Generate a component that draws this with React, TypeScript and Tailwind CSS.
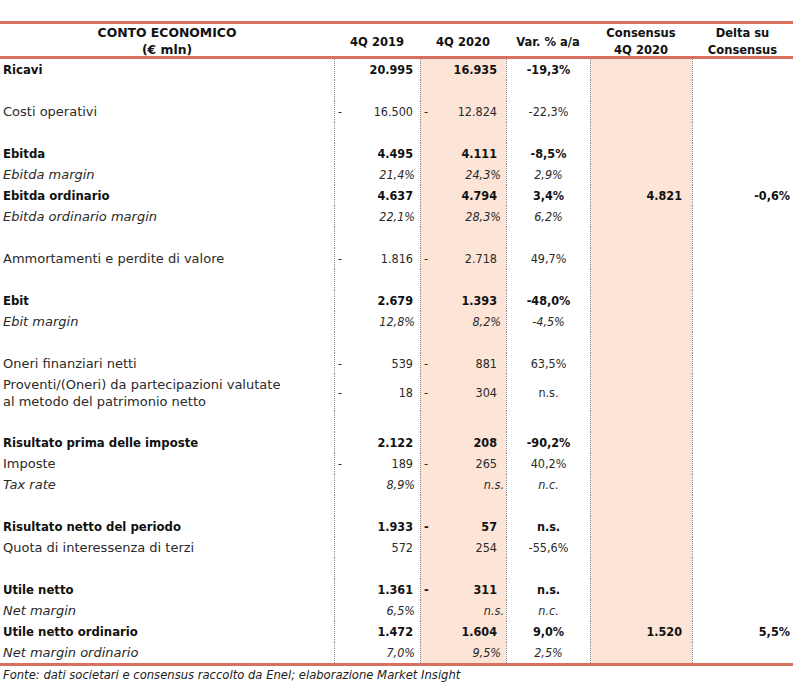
import React from "react";

type Row = {
  label?: string;
  label2?: string;
  kind: "bold" | "italic" | "normal" | "blank";
  c1?: string;
  d1?: boolean;
  c2?: string;
  d2?: boolean;
  c3?: string;
  c4?: string;
  c5?: string;
};

const rows: Row[] = [
  { label: "Ricavi", kind: "bold", c1: "20.995", c2: "16.935", c3: "-19,3%" },
  { kind: "blank" },
  { label: "Costi operativi", kind: "normal", c1: "16.500", d1: true, c2: "12.824", d2: true, c3: "-22,3%" },
  { kind: "blank" },
  { label: "Ebitda", kind: "bold", c1: "4.495", c2: "4.111", c3: "-8,5%" },
  { label: "Ebitda margin", kind: "italic", c1: "21,4%", c2: "24,3%", c3: "2,9%" },
  { label: "Ebitda ordinario", kind: "bold", c1: "4.637", c2: "4.794", c3: "3,4%", c4: "4.821", c5: "-0,6%" },
  { label: "Ebitda ordinario margin", kind: "italic", c1: "22,1%", c2: "28,3%", c3: "6,2%" },
  { kind: "blank" },
  { label: "Ammortamenti e perdite di valore", kind: "normal", c1: "1.816", d1: true, c2: "2.718", d2: true, c3: "49,7%" },
  { kind: "blank" },
  { label: "Ebit", kind: "bold", c1: "2.679", c2: "1.393", c3: "-48,0%" },
  { label: "Ebit margin", kind: "italic", c1: "12,8%", c2: "8,2%", c3: "-4,5%" },
  { kind: "blank" },
  { label: "Oneri finanziari netti", kind: "normal", c1: "539", d1: true, c2: "881", d2: true, c3: "63,5%" },
  {
    label: "Proventi/(Oneri) da partecipazioni valutate",
    label2: "al metodo del patrimonio netto",
    kind: "normal",
    c1: "18",
    d1: true,
    c2: "304",
    d2: true,
    c3: "n.s.",
  },
  { kind: "blank" },
  { label: "Risultato prima delle imposte", kind: "bold", c1: "2.122", c2: "208", c3: "-90,2%" },
  { label: "Imposte", kind: "normal", c1: "189", d1: true, c2: "265", d2: true, c3: "40,2%" },
  { label: "Tax rate", kind: "italic", c1: "8,9%", c2: "n.s.", c3: "n.c." },
  { kind: "blank" },
  { label: "Risultato netto del periodo", kind: "bold", c1: "1.933", c2: "57", d2: true, c3: "n.s." },
  { label: "Quota di interessenza di terzi", kind: "normal", c1: "572", c2: "254", c3: "-55,6%" },
  { kind: "blank" },
  { label: "Utile netto", kind: "bold", c1: "1.361", c2: "311", d2: true, c3: "n.s." },
  { label: "Net margin", kind: "italic", c1: "6,5%", c2: "n.s.", c3: "n.c." },
  { label: "Utile netto ordinario", kind: "bold", c1: "1.472", c2: "1.604", c3: "9,0%", c4: "1.520", c5: "5,5%" },
  { label: "Net margin ordinario", kind: "italic", c1: "7,0%", c2: "9,5%", c3: "2,5%" },
];

const GRID = "grid grid-cols-[334px_86px_86px_84px_102px_101px]";
const DOT = "border-l border-dotted border-[#8c8c8c]";
const SHADE = "bg-[#fce4d6]";

function textCls(kind: Row["kind"]) {
  if (kind === "bold") return "font-bold text-[#111] [font-stretch:condensed] font-['DejaVu_Sans_Condensed','DejaVu_Sans',sans-serif]";
  if (kind === "italic") return "italic text-[#2a2a2a] font-['DejaVu_Sans',sans-serif]";
  return "text-[#2a2a2a] font-['DejaVu_Sans',sans-serif]";
}

function numCls(kind: Row["kind"]) {
  if (kind === "bold") return "font-bold text-[#111]";
  if (kind === "italic") return "italic text-[#2a2a2a]";
  return "text-[#2a2a2a]";
}

function padFor(col: number, v: string) {
  const pct = v.endsWith("%");
  const ns = v.startsWith("n.");
  if (col === 1) return pct ? "pr-[5px]" : "pr-[7px]";
  if (col === 2) return ns ? "pr-[2px]" : pct ? "pr-[5px]" : "pr-[9px]";
  if (col === 4) return "pr-[10px]";
  return "pr-[3px]";
}

const NUMFONT = "font-['DejaVu_Sans_Condensed','DejaVu_Sans',sans-serif] [font-stretch:condensed] text-[12.5px]";

function ValueCell({
  v,
  dash,
  col,
  kind,
  extra,
}: {
  v?: string;
  dash?: boolean;
  col: number;
  kind: Row["kind"];
  extra: string;
}) {
  return (
    <div className={`${extra} ${DOT} flex items-center justify-between ${NUMFONT} ${numCls(kind)}`}>
      <span className="pl-[3px]">{dash ? "-" : ""}</span>
      <span className={v ? padFor(col, v) : ""}>{v ?? ""}</span>
    </div>
  );
}

export default function App() {
  return (
    <div className="w-[793px] h-[686px] bg-white pt-[21px] text-[13px] leading-[17px] font-['DejaVu_Sans',sans-serif]">
      {/* header */}
      <div className={`${GRID} h-[38px] border-y-[3px] border-[#d7705f] font-bold text-[#111] [font-stretch:condensed] font-['DejaVu_Sans_Condensed','DejaVu_Sans',sans-serif] text-[12.8px] leading-[17px]`}>
        <div className="flex flex-col items-center justify-center text-center [font-stretch:normal] font-['DejaVu_Sans',sans-serif] text-[12.4px]">
          <span>CONTO ECONOMICO</span>
          <span>(€ mln)</span>
        </div>
        <div className="flex items-center justify-center">4Q 2019</div>
        <div className="flex items-center justify-center">4Q 2020</div>
        <div className="flex items-center justify-center">Var. % a/a</div>
        <div className="flex flex-col items-center justify-center text-center">
          <span>Consensus</span>
          <span>4Q 2020</span>
        </div>
        <div className="flex flex-col items-center justify-center text-center">
          <span>Delta su</span>
          <span>Consensus</span>
        </div>
      </div>

      {/* body */}
      <div className="border-b-[3px] border-[#d7705f]">
        {rows.map((r, i) => {
          const h = r.label2 ? "h-[37px]" : "h-[21px]";
          return (
            <div key={i} className={`${GRID} ${h}`}>
              <div className={`flex flex-col justify-center pl-[3px] text-[13px] ${textCls(r.kind)}`}>
                {r.label && <span>{r.label}</span>}
                {r.label2 && <span>{r.label2}</span>}
              </div>
              <ValueCell v={r.c1} dash={r.d1} col={1} kind={r.kind} extra="" />
              <ValueCell v={r.c2} dash={r.d2} col={2} kind={r.kind} extra={SHADE} />
              <div className={`${DOT} flex items-center justify-center ${NUMFONT} ${numCls(r.kind)}`}>
                {r.c3 ?? ""}
              </div>
              <div className={`${DOT} ${SHADE} flex items-center justify-end ${NUMFONT} ${numCls(r.kind)}`}>
                <span className={r.c4 ? "pr-[10px]" : ""}>{r.c4 ?? ""}</span>
              </div>
              <div className={`${DOT} flex items-center justify-end ${NUMFONT} ${numCls(r.kind)}`}>
                <span className={r.c5 ? "pr-[3px]" : ""}>{r.c5 ?? ""}</span>
              </div>
            </div>
          );
        })}
      </div>

      <div className="pl-[3px] pt-[1px] italic text-[11.6px] leading-[17px] text-[#222] font-['DejaVu_Sans',sans-serif]">
        Fonte: dati societari e consensus raccolto da Enel; elaborazione Market Insight
      </div>
    </div>
  );
}
